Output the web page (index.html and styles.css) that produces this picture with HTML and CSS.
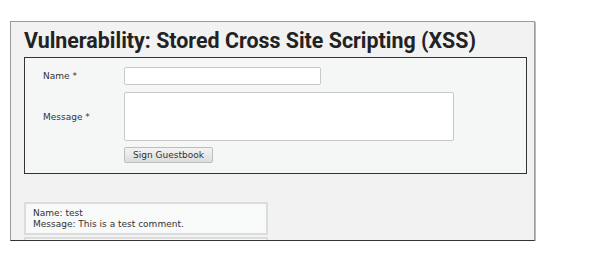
FILE: index.html
```html
<!DOCTYPE html>
<html lang="en">
<head>
    <meta charset="UTF-8">
    <title>Vulnerability: Stored Cross Site Scripting (XSS)</title>
    <link rel="stylesheet" href="styles.css">
</head>
<body>
    <div class="main_body">
        <h1>Vulnerability: Stored Cross Site Scripting (XSS)</h1>
        <div class="vulnerable_code_area">
            <form class="guestbook">
                <div class="row">
                    <label for="txtName">Name *</label>
                    <input type="text" id="txtName" class="txt-name">
                </div>
                <div class="row row-msg">
                    <label for="mtxMessage">Message *</label>
                    <textarea id="mtxMessage" class="txt-msg"></textarea>
                </div>
                <div class="row">
                    <span></span>
                    <button type="button" class="btn">Sign Guestbook</button>
                </div>
            </form>
        </div>
        <div class="comments">
            <div class="comment">Name: test<br>Message: This is a test comment.</div>
            <div class="comment comment-next"></div>
        </div>
    </div>
</body>
</html>
```

FILE: styles.css
```css
body {
    margin: 0;
    background: #fff;
    font-family: "DejaVu Sans", sans-serif;
}
.main_body {
    margin: 21px 0 0 10px;
    width: 523px;
    height: 218px;
    overflow: hidden;
    background: #f2f2f2;
    border: 1px solid #9a9a9a;
    border-bottom-color: #333;
    box-shadow: 1px 1px 0 #bbb;
}
h1 {
    margin: 0;
    padding: 7px 0 0 13px;
    height: 28px;
    font-family: Roboto, "Liberation Sans", sans-serif;
    font-weight: 700;
    font-size: 21.4px;
    line-height: 24px;
    color: #222;
}
.vulnerable_code_area {
    margin: 0 7px 0 13px;
    border: 1px solid #333;
    background: #f5f7f7;
    padding: 9px 0 10px 18px;
}
.row {
    display: flex;
    align-items: center;
    margin-bottom: 6px;
}
.row:last-child {
    margin-bottom: 0;
}
.row label, .row span {
    width: 81px;
    font-size: 9px;
    color: #333;
}
.txt-name {
    width: 197px;
    height: 18px;
    box-sizing: border-box;
    margin: 0;
    border: 1px solid #c8c8c8;
    border-radius: 2px;
    background: #fff;
}
.row-msg {
    margin-top: 7px;
}
.txt-msg {
    width: 330px;
    height: 49px;
    box-sizing: border-box;
    margin: 0;
    border: 1px solid #c8c8c8;
    border-radius: 2px;
    background: #fff;
    resize: none;
}
.btn {
    width: 89px;
    height: 16px;
    padding: 0;
    margin: 0;
    border: 1px solid #bdbdbd;
    border-radius: 2px;
    background: linear-gradient(#f4f4f4, #dcdcdc);
    font-family: "DejaVu Sans", sans-serif;
    font-size: 9px;
    color: #333;
}
.comments {
    margin: 28px 0 0 13px;
}
.comment {
    width: 226px;
    margin-bottom: 2px;
    padding: 4px 7px 3px 7px;
    border: 2px solid #dcdcdc;
    background: #f8f9f9;
    font-size: 9px;
    line-height: 11px;
    color: #333;
}
.comment-next {
    height: 20px;
}
```
